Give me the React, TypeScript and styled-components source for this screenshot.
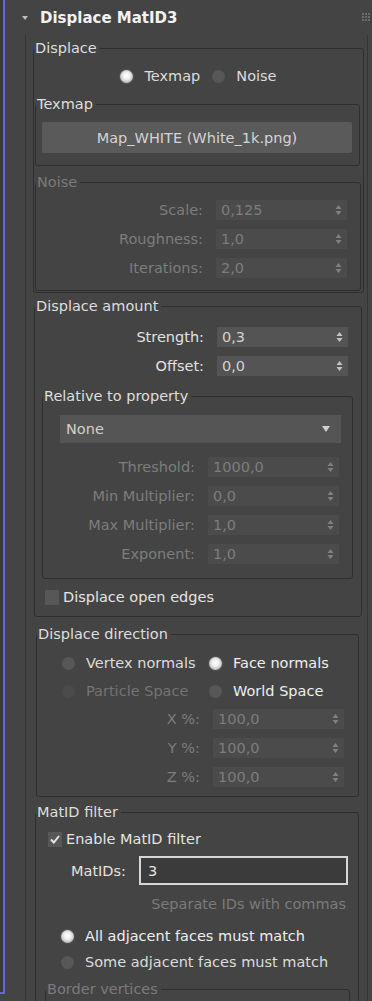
import React from 'react';
import styled, { createGlobalStyle } from 'styled-components';

const GlobalStyle = createGlobalStyle`
  html, body { margin: 0; padding: 0; background: #444444; }
  body {
    font-family: "DejaVu Sans", "Liberation Sans", sans-serif;
    font-size: 14.5px;
    color: #dcdcdc;
  }
  * { box-sizing: border-box; }
`;

const Page = styled.div`
  display: flex;
  align-items: flex-start;
  width: 372px;
  height: 1001px;
  overflow: hidden;
  background: #444444;
`;

const SidePanel = styled.div`
  flex: none;
  width: 5px;
  height: 994px;
  background: #393939;
  border-right: 2px solid #6464e4;
  border-bottom: 2px solid #6464e4;
`;

const Rollout = styled.div`
  flex: 1;
  display: flex;
  flex-direction: column;
  min-width: 0;
  min-height: 1001px;
`;

const RolloutHeader = styled.div`
  flex: none;
  height: 35px;
  display: flex;
  align-items: center;
  padding-left: 17px;
  padding-right: 1px;
  gap: 12px;
`;

const Title = styled.div`
  flex: 1;
  font-weight: bold;
  font-size: 15px;
  color: #f2f2f2;
  line-height: 16px;
`;

const RolloutBody = styled.div`
  flex: 1 0 auto;
  margin-left: 20px;
  margin-right: 4px;
  border-left: 1px solid #353535;
  border-right: 1px solid #353535;
  display: flex;
  flex-direction: column;
  padding-top: 5px;
`;

const Group = styled.fieldset<{ $m: string }>`
  flex: none;
  margin: ${p => p.$m};
  padding: 0;
  border: 1px solid #2e2e2e;
  border-radius: 3px;
  min-width: 0;
`;

const Legend = styled.legend<{ $dim?: boolean }>`
  padding: 0 3px 0 1px;
  line-height: 16px;
  font-size: 14.5px;
  color: ${p => (p.$dim ? '#7b7b7b' : '#dedede')};
`;

const GroupBody = styled.div<{ $p: string }>`
  display: flex;
  flex-direction: column;
  padding: ${p => p.$p};
`;

const RadioRow = styled.div<{ $center?: boolean }>`
  display: flex;
  align-items: center;
  justify-content: ${p => (p.$center ? 'center' : 'flex-start')};
  gap: 12px;
  height: 20px;
`;

const RadioGrid = styled.div<{ $gap: number }>`
  display: grid;
  grid-template-columns: 147px auto;
  row-gap: ${p => p.$gap}px;
  padding-left: 25px;
`;

const RadioItem = styled.div<{ $dim?: boolean; $bright?: boolean }>`
  display: flex;
  align-items: center;
  gap: 11px;
  height: 20px;
  color: ${p => (p.$dim ? '#737373' : p.$bright ? '#eeeeee' : '#dcdcdc')};
  white-space: nowrap;
`;

const RadioDot = styled.span<{ $on?: boolean; $dim?: boolean }>`
  flex: none;
  width: 13px;
  height: 13px;
  border-radius: 50%;
  background: ${p =>
    p.$on
      ? 'radial-gradient(circle at 50% 45%, #ffffff 0%, #f0f0f0 35%, #bdbdbd 70%, #8a8a8a 100%)'
      : p.$dim
      ? '#4b4b4b'
      : '#575757'};
  box-shadow: ${p => (p.$on ? '0 0 2px rgba(255,255,255,0.35)' : 'none')};
`;

const PushButton = styled.div`
  height: 31px;
  margin: 0 7px 0 6px;
  background: #5a5a5a;
  border-radius: 2px;
  display: flex;
  align-items: center;
  justify-content: center;
  color: #d4d4d4;
`;

const FieldStack = styled.div<{ $right: number }>`
  display: flex;
  flex-direction: column;
  gap: 9px;
  padding-right: ${p => p.$right}px;
`;

const FieldRow = styled.div<{ $dim?: boolean }>`
  display: flex;
  align-items: center;
  justify-content: flex-end;
  gap: 13px;
  height: 20px;
  color: ${p => (p.$dim ? '#7d7d7d' : '#e2e2e2')};
`;

const Spinner = styled.div<{ $dim?: boolean }>`
  flex: none;
  width: 131px;
  height: 20px;
  display: flex;
  align-items: center;
  justify-content: space-between;
  padding: 0 5px 0 5px;
  background: ${p => (p.$dim ? '#4b4b4b' : '#545454')};
  color: ${p => (p.$dim ? '#7d7d7d' : '#d2d2d2')};
`;

const Dropdown = styled.div`
  height: 28px;
  margin: 0 11px 0 17px;
  background: #555555;
  display: flex;
  align-items: center;
  justify-content: space-between;
  padding: 0 11px 0 6px;
  color: #d0d0d0;
`;

const CheckRow = styled.div<{ $inset: number }>`
  display: flex;
  align-items: center;
  gap: 4px;
  height: 16px;
  padding-left: ${p => p.$inset}px;
  color: #e4e4e4;
  white-space: nowrap;
`;

const CheckBox = styled.span`
  flex: none;
  width: 14px;
  height: 15px;
  background: #575757;
  display: flex;
  align-items: center;
  justify-content: center;
`;

const InputRow = styled.div`
  display: flex;
  align-items: center;
  gap: 13px;
  padding-left: 35px;
  padding-right: 10px;
`;

const InputLabel = styled.span`
  color: #e2e2e2;
`;

const TextInput = styled.div`
  flex: 1;
  height: 29px;
  border: 2px solid #d6d6d6;
  background: #3b3b3b;
  display: flex;
  align-items: center;
  padding-left: 7px;
  color: #e4e4e4;
`;

const Hint = styled.div`
  text-align: right;
  padding-right: 12px;
  line-height: 16px;
  color: #7b7b7b;
`;

const Spacer = styled.div<{ $h: number }>`
  flex: none;
  height: ${p => p.$h}px;
`;

const Arrows: React.FC<{ dim?: boolean }> = ({ dim }) => (
  <svg width="7" height="12" viewBox="0 0 7 12">
    <path d="M3.5 1 L6.5 5 L0.5 5 Z" fill={dim ? '#808080' : '#c4c4c4'} />
    <path d="M3.5 11 L6.5 7 L0.5 7 Z" fill={dim ? '#808080' : '#c4c4c4'} />
  </svg>
);

const Field: React.FC<{ label: string; value: string; dim?: boolean }> = ({ label, value, dim }) => (
  <FieldRow $dim={dim}>
    <span>{label}</span>
    <Spinner $dim={dim}>
      <span>{value}</span>
      <Arrows dim={dim} />
    </Spinner>
  </FieldRow>
);

const Radio: React.FC<{ label: string; on?: boolean; dim?: boolean; bright?: boolean }> = ({ label, on, dim, bright }) => (
  <RadioItem $dim={dim} $bright={bright}>
    <RadioDot $on={on} $dim={dim} />
    <span>{label}</span>
  </RadioItem>
);

const Check: React.FC<{ label: string; checked?: boolean; inset: number }> = ({ label, checked, inset }) => (
  <CheckRow $inset={inset}>
    <CheckBox>
      {checked && (
        <svg width="10" height="9" viewBox="0 0 10 9">
          <path d="M1 4.5 L3.8 7.5 L9 1" stroke="#e6e6e6" strokeWidth="2" fill="none" />
        </svg>
      )}
    </CheckBox>
    <span>{label}</span>
  </CheckRow>
);

export default function App() {
  return (
    <>
      <GlobalStyle />
      <Page>
        <SidePanel />
        <Rollout>
          <RolloutHeader>
            <svg width="6" height="4" viewBox="0 0 6 4">
              <path d="M0 0 L6 0 L3 4 Z" fill="#bdbdbd" />
            </svg>
            <Title>Displace MatID3</Title>
            <svg width="9" height="9" viewBox="0 0 9 9">
              {[0, 3, 6].map(x =>
                [0, 3, 6].map(y => <rect key={`${x}-${y}`} x={x} y={y} width="2" height="2" fill="#6a6a6a" />)
              )}
            </svg>
          </RolloutHeader>
          <RolloutBody>
            <Group $m="0 3px 0 7px">
              <Legend>Displace</Legend>
              <GroupBody $p="10px 1px 1px 1px">
                <RadioRow $center>
                  <Radio label="Texmap" on />
                  <Radio label="Noise" />
                </RadioRow>
                <Spacer $h={10} />
                <Group $m="0 2px 0 0">
                  <Legend>Texmap</Legend>
                  <GroupBody $p="10px 0 12px 0">
                    <PushButton>Map_WHITE (White_1k.png)</PushButton>
                  </GroupBody>
                </Group>
                <Spacer $h={8} />
                <Group $m="0 1px 0 0">
                  <Legend $dim>Noise</Legend>
                  <GroupBody $p="10px 0 12px 0">
                    <FieldStack $right={13}>
                      <Field label="Scale:" value="0,125" dim />
                      <Field label="Roughness:" value="1,0" dim />
                      <Field label="Iterations:" value="2,0" dim />
                    </FieldStack>
                  </GroupBody>
                </Group>
              </GroupBody>
            </Group>
            <Spacer $h={5} />
            <Group $m="0 5px 0 8px">
              <Legend>Displace amount</Legend>
              <GroupBody $p="13px 0 11px 0">
                <FieldStack $right={13}>
                  <Field label="Strength:" value="0,3" />
                  <Field label="Offset:" value="0,0" />
                </FieldStack>
                <Spacer $h={12} />
                <Group $m="0 8px 0 7px">
                  <Legend>Relative to property</Legend>
                  <GroupBody $p="11px 0 14px 0">
                    <Dropdown>
                      <span>None</span>
                      <svg width="8" height="6" viewBox="0 0 8 6">
                        <path d="M0 0 L8 0 L4 6 Z" fill="#cfcfcf" />
                      </svg>
                    </Dropdown>
                    <Spacer $h={14} />
                    <FieldStack $right={13}>
                      <Field label="Threshold:" value="1000,0" dim />
                      <Field label="Min Multiplier:" value="0,0" dim />
                      <Field label="Max Multiplier:" value="1,0" dim />
                      <Field label="Exponent:" value="1,0" dim />
                    </FieldStack>
                  </GroupBody>
                </Group>
                <Spacer $h={10} />
                <Check label="Displace open edges" inset={10} />
              </GroupBody>
            </Group>
            <Spacer $h={9} />
            <Group $m="0 8px 0 10px">
              <Legend>Displace direction</Legend>
              <GroupBody $p="11px 0 9px 0">
                <RadioGrid $gap={8}>
                  <Radio label="Vertex normals" />
                  <Radio label="Face normals" on bright />
                  <Radio label="Particle Space" dim />
                  <Radio label="World Space" bright />
                </RadioGrid>
                <Spacer $h={8} />
                <FieldStack $right={14}>
                  <Field label="X %:" value="100,0" dim />
                  <Field label="Y %:" value="100,0" dim />
                  <Field label="Z %:" value="100,0" dim />
                </FieldStack>
              </GroupBody>
            </Group>
            <Spacer $h={7} />
            <Group $m="0 8px 0 9px">
              <Legend>MatID filter</Legend>
              <GroupBody $p="11px 0 0 0">
                <Check label="Enable MatID filter" checked inset={12} />
                <Spacer $h={9} />
                <InputRow>
                  <InputLabel>MatIDs:</InputLabel>
                  <TextInput>3</TextInput>
                </InputRow>
                <Spacer $h={11} />
                <Hint>Separate IDs with commas</Hint>
                <Spacer $h={14} />
                <RadioGrid $gap={6}>
                  <Radio label="All adjacent faces must match" on bright />
                  <span />
                  <Radio label="Some adjacent faces must match" />
                  <span />
                </RadioGrid>
                <Spacer $h={9} />
                <Group $m="0 8px 0 9px">
                  <Legend $dim>Border vertices</Legend>
                  <GroupBody $p="10px 0 40px 0" />
                </Group>
              </GroupBody>
            </Group>
          </RolloutBody>
        </Rollout>
      </Page>
    </>
  );
}
